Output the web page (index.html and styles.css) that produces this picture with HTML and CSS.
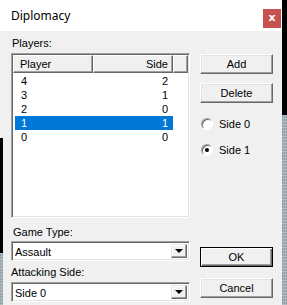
FILE: index.html
```html
<!DOCTYPE html>
<html lang="en">
<head>
  <meta charset="UTF-8" />
  <title>Diplomacy</title>
  <link rel="stylesheet" href="styles.css">
</head>
<body>
  <div class="screen">
    <div class="window">
      <!-- Title bar -->
      <div class="titlebar">
        <span class="title">Diplomacy</span>
        <span class="close-btn">x</span>
      </div>

      <div class="frame">
        <div class="edge-left">
          <div class="edge-gray"></div>
          <div class="edge-black"></div>
          <div class="edge-tex"></div>
        </div>

        <div class="client">
          <!-- Left column: list and combos -->
          <div class="col-main">
            <div class="label">Players:</div>
            <div class="listview">
              <div class="lv-header">
                <div class="hd hd-player">Player</div>
                <div class="hd hd-side">Side</div>
                <div class="hd hd-rest"></div>
              </div>
              <div class="lv-row"><span class="c-player">4</span><span class="c-side">2</span></div>
              <div class="lv-row"><span class="c-player">3</span><span class="c-side">1</span></div>
              <div class="lv-row"><span class="c-player">2</span><span class="c-side">0</span></div>
              <div class="lv-row selected"><span class="c-player">1</span><span class="c-side">1</span></div>
              <div class="lv-row"><span class="c-player">0</span><span class="c-side">0</span></div>
            </div>

            <div class="label label-game">Game Type:</div>
            <div class="combo">
              <span class="combo-text">Assault</span>
              <span class="combo-btn"><span class="arrow"></span></span>
            </div>

            <div class="label label-attack">Attacking Side:</div>
            <div class="combo">
              <span class="combo-text">Side 0</span>
              <span class="combo-btn"><span class="arrow"></span></span>
            </div>
          </div>

          <!-- Right column: buttons and radios -->
          <div class="col-side">
            <button class="btn btn-add">Add</button>
            <button class="btn btn-delete">Delete</button>

            <label class="radio radio-first"><span class="radio-dot"></span>Side 0</label>
            <label class="radio"><span class="radio-dot checked"></span>Side 1</label>

            <button class="btn btn-ok">OK</button>
            <button class="btn btn-cancel">Cancel</button>
          </div>
        </div>
      </div>
    </div>

    <div class="edge-right">
      <div class="edge-black"></div>
      <div class="edge-tex"></div>
    </div>
  </div>
</body>
</html>
```

FILE: styles.css
```css
/* GLOBAL */
body {
  margin: 0;
  padding: 0;
  font-family: 'Liberation Sans', Arial, sans-serif;
  font-size: 11px;
  color: #000;
  background: #000;
}

.screen {
  display: flex;
  width: 287px;
  height: 305px;
  overflow: hidden;
}

/* WINDOW */
.window {
  width: 282px;
  display: flex;
  flex-direction: column;
  background-color: #f0f0f0;
}

.titlebar {
  height: 31px;
  background-color: #fff;
  display: flex;
  align-items: flex-start;
  justify-content: space-between;
}
.title {
  font-family: 'Noto Sans', 'Open Sans', sans-serif;
  font-size: 12px;
  line-height: 16px;
  margin: 8px 0 0 11px;
}
.close-btn {
  width: 18px;
  height: 19px;
  margin: 9px 1px 0 0;
  background-color: #c75050;
  color: #fff;
  font-family: 'DejaVu Sans', sans-serif;
  font-weight: bold;
  font-size: 11px;
  line-height: 18px;
  text-align: center;
}

.frame {
  flex: 1;
  display: flex;
}

/* screen edges behind the window */
.edge-left {
  width: 3px;
  display: flex;
  flex-direction: column;
}
.edge-left .edge-gray { height: 107px; background: #f0f0f0; }
.edge-left .edge-black { height: 115px; background: #000; }
.edge-left .edge-tex { flex: 1; }

.edge-right {
  width: 5px;
  display: flex;
  flex-direction: column;
}
.edge-right .edge-black { height: 115px; background: #000; }
.edge-right .edge-tex { flex: 1; }

.edge-tex {
  background-color: #a3b2b6;
  background-image:
    repeating-linear-gradient(0deg, rgba(255,255,255,0.25) 0 1px, transparent 1px 3px),
    repeating-linear-gradient(90deg, rgba(60,80,90,0.2) 0 1px, transparent 1px 2px);
}

/* CLIENT AREA */
.client {
  flex: 1;
  display: flex;
  padding: 6px 0 0 8px;
}

.col-main {
  width: 179px;
  display: flex;
  flex-direction: column;
}

.label {
  line-height: 13px;
  padding-left: 1px;
  margin-bottom: 3px;
}
.label-game {
  margin-top: 8px;
  margin-bottom: 2px;
  padding-left: 2px;
}
.label-attack {
  margin-top: 5px;
  margin-bottom: 3px;
  padding-left: 0;
}

/* LIST VIEW (sunken) */
.listview {
  height: 165px;
  box-sizing: border-box;
  background: #fff;
  border-top: 1px solid #a0a0a0;
  border-left: 1px solid #a0a0a0;
  border-right: 1px solid #fff;
  border-bottom: 1px solid #fff;
  box-shadow: inset 1px 1px 0 #696969, inset -1px -1px 0 #e3e3e3;
  padding: 1px 1px 0 1px;
}

.lv-header {
  display: flex;
  height: 18px;
  margin-bottom: 1px;
}
.hd {
  box-sizing: border-box;
  height: 18px;
  line-height: 16px;
  background: #f0f0f0;
  border-top: 1px solid #fff;
  border-left: 1px solid #fff;
  border-right: 1px solid #696969;
  border-bottom: 1px solid #696969;
  box-shadow: inset -1px -1px 0 #a0a0a0;
  padding: 0 4px 0 6px;
}
.hd-player { width: 80px; }
.hd-side { width: 80px; text-align: right; }
.hd-rest { flex: 1; }

.lv-row {
  display: flex;
  height: 14px;
  line-height: 14px;
  width: 158px;
  margin-left: 2px;
}
.lv-row.selected {
  background-color: #0078d7;
  color: #fff;
}
.c-player {
  width: 70px;
  padding-left: 6px;
}
.c-side {
  flex: 1;
  text-align: right;
  padding-right: 5px;
}

/* COMBO BOX */
.combo {
  height: 20px;
  box-sizing: border-box;
  background: #fff;
  display: flex;
  border-top: 1px solid #a0a0a0;
  border-left: 1px solid #a0a0a0;
  border-right: 1px solid #fff;
  border-bottom: 1px solid #fff;
  box-shadow: inset 1px 1px 0 #696969, inset -1px -1px 0 #e3e3e3;
  padding: 2px;
}
.combo-text {
  flex: 1;
  line-height: 16px;
  padding-left: 1px;
}
.combo-btn {
  width: 16px;
  box-sizing: border-box;
  background: #f0f0f0;
  border-top: 1px solid #e3e3e3;
  border-left: 1px solid #e3e3e3;
  border-right: 1px solid #696969;
  border-bottom: 1px solid #696969;
  box-shadow: inset -1px -1px 0 #a0a0a0, inset 1px 1px 0 #fff;
  display: flex;
  align-items: center;
  justify-content: center;
}
.arrow {
  width: 0;
  height: 0;
  border-left: 4px solid transparent;
  border-right: 4px solid transparent;
  border-top: 4px solid #000;
}

/* SIDE COLUMN */
.col-side {
  width: 73px;
  margin-left: 10px;
  padding-top: 17px;
  display: flex;
  flex-direction: column;
}

.btn {
  height: 20px;
  box-sizing: border-box;
  background: #f0f0f0;
  font-family: 'Liberation Sans', Arial, sans-serif;
  font-size: 11px;
  color: #000;
  padding: 0;
  border-top: 1px solid #fff;
  border-left: 1px solid #fff;
  border-right: 1px solid #696969;
  border-bottom: 1px solid #696969;
  box-shadow: inset -1px -1px 0 #a0a0a0, inset 1px 1px 0 #e3e3e3;
}
.btn-delete { margin-top: 9px; }
.btn-ok {
  margin-top: auto;
  border: 1px solid #000;
  box-shadow: inset 1px 1px 0 #fff, inset -1px -1px 0 #696969, inset -2px -2px 0 #a0a0a0;
}
.btn-cancel {
  margin-top: 11px;
  margin-bottom: 7px;
}

/* RADIO BUTTONS */
.radio {
  display: flex;
  align-items: center;
  height: 13px;
  margin-top: 13px;
  padding-left: 1px;
}
.radio-first { margin-top: 14px; }
.radio-dot {
  width: 12px;
  height: 12px;
  box-sizing: border-box;
  border-radius: 50%;
  background: #fff;
  border: 1px solid;
  border-color: #a0a0a0 #fff #fff #a0a0a0;
  box-shadow: inset 1px 1px 0 #696969;
  margin-right: 6px;
  display: flex;
  align-items: center;
  justify-content: center;
}
.radio-dot.checked::after {
  content: "";
  width: 4px;
  height: 4px;
  border-radius: 50%;
  background: #000;
}
```
